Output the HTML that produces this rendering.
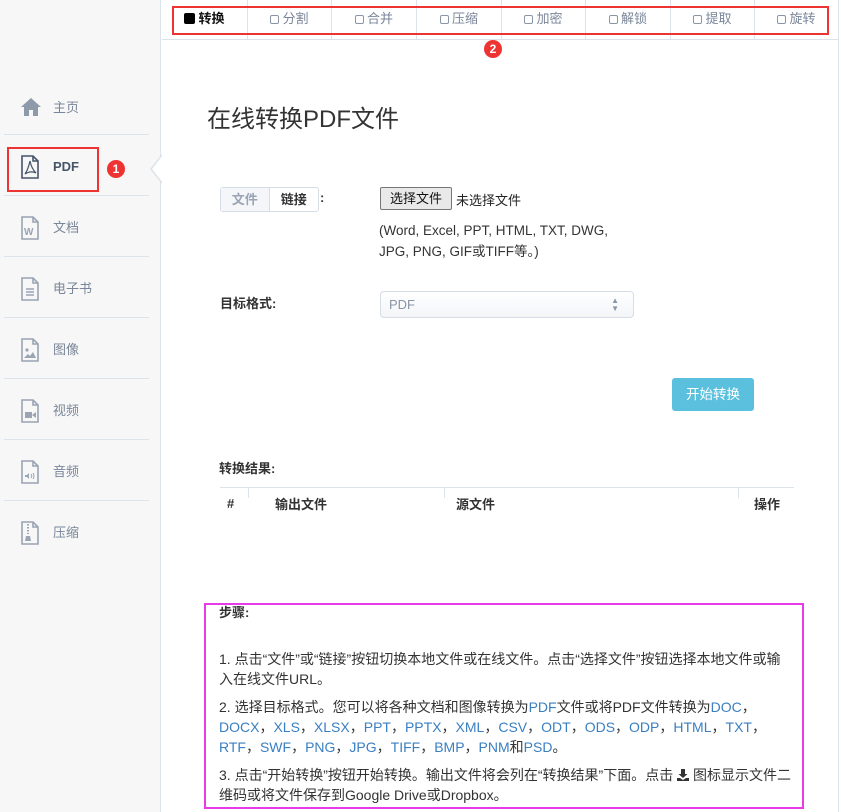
<!DOCTYPE html>
<html><head><meta charset="utf-8"><style>
*{margin:0;padding:0;box-sizing:border-box}
body{width:841px;height:812px;overflow:hidden;background:#fff;font-family:"Liberation Sans","Noto Sans CJK SC",sans-serif;color:#333;position:relative;font-size:13px}
.abs{position:absolute}
#side{left:0;top:0;width:161px;height:812px;background:#f7f7f7;border-right:1px solid #dde3ea}
.item{position:absolute;left:4px;width:145px;height:61px;border-bottom:1px solid #dde3ea}
.item span{position:absolute;left:49px;top:24px;color:#7a8699;font-size:13px;line-height:16px}
.item svg{position:absolute;left:16px;top:20px}
.tab{position:absolute;top:0;height:40px;border-right:1px solid #dde3ea;border-bottom:1px solid #dde3ea;font-size:13px;color:#7a8699;line-height:38px;text-align:center}
.cb{display:inline-block;width:9px;height:9px;border:1px solid #8a95a5;border-radius:2px;margin-right:3px;vertical-align:-1px}
.badge{width:18px;height:18px;border-radius:50%;background:#ee3333;color:#fff;font-size:12px;line-height:18px;text-align:center;font-weight:bold}
a{color:#3a7fc1;text-decoration:none}
.th{position:absolute;top:494px;font-weight:bold;font-size:13px;color:#333}
</style></head><body>
<div id="side" class="abs">
 <div class="item" style="top:74px"><svg width="22" height="20" viewBox="0 0 22 20" style="top:23px"><path d="M11 1 L1 10 L4 10 L4 19 L9 19 L9 13 L13 13 L13 19 L18 19 L18 10 L21 10 Z" fill="#8e99a9"/></svg><span style="top:26px">主页</span></div>
 <div class="item" style="top:135px"><svg width="20" height="24" viewBox="0 0 20 24"><path d="M2 1 H13 L18 6 V23 H2 Z M13 1 V6 H18" fill="none" stroke="#46546a" stroke-width="1.6"/><path d="M5 19 C8 15 9 10 10 6 C11 11 13 15 16 18 C12 16 8 17 5 19Z" fill="none" stroke="#46546a" stroke-width="1.2"/></svg><span style="color:#46546a;font-weight:bold">PDF</span></div>
 <div class="item" style="top:196px"><svg width="20" height="24" viewBox="0 0 20 24"><path d="M2 1 H13 L18 6 V23 H2 Z M13 1 V6 H18" fill="none" stroke="#9aa4b3" stroke-width="1.6"/><text x="4" y="19" font-size="10" font-weight="bold" fill="#9aa4b3" font-family="Liberation Sans">W</text></svg><span>文档</span></div>
 <div class="item" style="top:257px"><svg width="20" height="24" viewBox="0 0 20 24"><path d="M2 1 H13 L18 6 V23 H2 Z M13 1 V6 H18 M6 12 H14 M6 15 H14 M6 18 H14" fill="none" stroke="#9aa4b3" stroke-width="1.6"/></svg><span>电子书</span></div>
 <div class="item" style="top:318px"><svg width="20" height="24" viewBox="0 0 20 24"><path d="M2 1 H13 L18 6 V23 H2 Z M13 1 V6 H18" fill="none" stroke="#9aa4b3" stroke-width="1.6"/><circle cx="7" cy="12" r="1.6" fill="#9aa4b3"/><path d="M4 20 L8 16 L10 18 L13 14 L16 20Z" fill="#9aa4b3"/></svg><span>图像</span></div>
 <div class="item" style="top:379px"><svg width="20" height="24" viewBox="0 0 20 24"><path d="M2 1 H13 L18 6 V23 H2 Z M13 1 V6 H18" fill="none" stroke="#9aa4b3" stroke-width="1.6"/><rect x="5" y="13" width="7" height="6" fill="#9aa4b3"/><path d="M12 16 L16 13 V19Z" fill="#9aa4b3"/></svg><span>视频</span></div>
 <div class="item" style="top:440px"><svg width="20" height="24" viewBox="0 0 20 24"><path d="M2 1 H13 L18 6 V23 H2 Z M13 1 V6 H18" fill="none" stroke="#9aa4b3" stroke-width="1.6"/><path d="M5 15 H7 L9 13 V19 L7 17 H5Z" fill="#9aa4b3"/><path d="M11 14 Q12.5 16 11 18 M13 13 Q15 16 13 19" fill="none" stroke="#9aa4b3"/></svg><span>音频</span></div>
 <div class="item" style="top:501px;border-bottom:none"><svg width="20" height="24" viewBox="0 0 20 24"><path d="M2 1 H13 L18 6 V23 H2 Z M13 1 V6 H18" fill="none" stroke="#9aa4b3" stroke-width="1.6"/><path d="M8 3 V13" stroke="#9aa4b3" stroke-dasharray="1.5 1.5" stroke-width="2"/><path d="M6 15 H10 L11 20 H5Z" fill="#9aa4b3"/></svg><span>压缩</span></div>
</div>
<div class="abs" style="left:150px;top:154px;width:0;height:0;border-top:15px solid transparent;border-bottom:15px solid transparent;border-right:12px solid #dde3ea"></div>
<div class="abs" style="left:152px;top:155px;width:0;height:0;border-top:14px solid transparent;border-bottom:14px solid transparent;border-right:11px solid #fff"></div>
<div class="abs" style="left:7px;top:147px;width:92px;height:45px;border:2px solid #ee3333"></div>
<div class="abs badge" style="left:107px;top:160px">1</div>
<div class="abs" style="left:838px;top:40px;width:1px;height:772px;background:#dde3ea"></div>

<div class="tab" style="left:162px;width:86px;color:#111;font-weight:bold"><span class="cb" style="background:#000;border-color:#000;width:11px;height:11px"></span>转换</div>
<div class="tab" style="left:248px;width:84px"><span class="cb"></span>分割</div>
<div class="tab" style="left:332px;width:85px"><span class="cb"></span>合并</div>
<div class="tab" style="left:417px;width:85px"><span class="cb"></span>压缩</div>
<div class="tab" style="left:502px;width:84px"><span class="cb"></span>加密</div>
<div class="tab" style="left:586px;width:85px"><span class="cb"></span>解锁</div>
<div class="tab" style="left:671px;width:84px"><span class="cb"></span>提取</div>
<div class="tab" style="left:755px;width:84px"><span class="cb"></span>旋转</div>
<div class="abs" style="left:172px;top:6px;width:657px;height:29px;border:2px solid #ee3333"></div>
<div class="abs badge" style="left:484px;top:40px">2</div>

<div class="abs" style="left:207px;top:99px;font-size:24px;color:#333">在线转换PDF文件</div>

<div class="abs" style="left:220px;top:187px;width:99px;height:25px;border:1px solid #d5dde7;border-radius:3px;display:flex;font-size:13px;font-weight:bold;line-height:23px">
<div style="width:49px;text-align:center;color:#9aa4b3;background:#f4f6f9;border-right:1px solid #d5dde7">文件</div><div style="width:49px;text-align:center;color:#333">链接</div></div>
<div class="abs" style="left:320px;top:190px;font-weight:bold">:</div>
<div class="abs" style="left:380px;top:187px;width:72px;height:23px;border:1px solid #777;background:#e9e9e9;border-radius:2px;font-size:13px;line-height:21px;text-align:center;color:#111">选择文件</div>
<div class="abs" style="left:456px;top:190px;color:#222">未选择文件</div>
<div class="abs" style="left:379px;top:220px;line-height:21px;color:#333;font-size:13.5px">(Word, Excel, PPT, HTML, TXT, DWG,<br>JPG, PNG, GIF或TIFF等。)</div>
<div class="abs" style="left:220px;top:293px;font-weight:bold">目标格式:</div>
<div class="abs" style="left:380px;top:291px;width:254px;height:27px;border:1px solid #d5dde7;border-radius:4px;background:linear-gradient(#fff,#f3f5f8);color:#8a95a5;line-height:25px;padding-left:8px">PDF<span style="position:absolute;right:14px;top:0;font-size:8px;line-height:8px;padding-top:5px">▲<br>▼</span></div>
<div class="abs" style="left:672px;top:378px;width:82px;height:33px;background:#5bc0de;border-radius:3px;color:#fff;line-height:33px;text-align:center;font-size:13.5px">开始转换</div>
<div class="abs" style="left:219px;top:458px;font-weight:bold">转换结果:</div>
<div class="abs" style="left:220px;top:487px;width:574px;height:1px;background:#dde3ea"></div>
<div class="abs" style="left:248px;top:488px;width:1px;height:10px;background:#dde3ea"></div>
<div class="abs" style="left:444px;top:488px;width:1px;height:10px;background:#dde3ea"></div>
<div class="abs" style="left:738px;top:488px;width:1px;height:10px;background:#dde3ea"></div>
<div class="th" style="left:227px;top:496px">#</div>
<div class="th" style="left:275px">输出文件</div>
<div class="th" style="left:456px">源文件</div>
<div class="th" style="left:754px">操作</div>

<div class="abs" style="left:204px;top:603px;width:600px;height:206px;border:2px solid #e83be8"></div>
<div class="abs" style="left:219px;top:603px;width:574px;font-size:14px;line-height:20px;color:#333">
<div style="font-weight:bold;font-size:13px">步骤:</div>
<div style="margin-top:26px">1. 点击“文件”或“链接”按钮切换本地文件或在线文件。点击“选择文件”按钮选择本地文件或输入在线文件URL。</div>
<div style="margin-top:8px">2. 选择目标格式。您可以将各种文档和图像转换为<a>PDF</a>文件或将PDF文件转换为<a>DOC</a>，<a>DOCX</a>，<a>XLS</a>，<a>XLSX</a>，<a>PPT</a>，<a>PPTX</a>，<a>XML</a>，<a>CSV</a>，<a>ODT</a>，<a>ODS</a>，<a>ODP</a>，<a>HTML</a>，<a>TXT</a>，<a>RTF</a>，<a>SWF</a>，<a>PNG</a>，<a>JPG</a>，<a>TIFF</a>，<a>BMP</a>，<a>PNM</a>和<a>PSD</a>。</div>
<div style="margin-top:8px">3. 点击“开始转换”按钮开始转换。输出文件将会列在“转换结果”下面。点击 <svg width="12" height="12" viewBox="0 0 12 12" style="vertical-align:-1px"><path d="M4 0 H8 V5 H10.5 L6 9 L1.5 5 H4Z M0 9 H3 L6 11 L9 9 H12 V12 H0Z" fill="#333"/></svg> 图标显示文件二维码或将文件保存到Google Drive或Dropbox。</div>
</div>
</body></html>
